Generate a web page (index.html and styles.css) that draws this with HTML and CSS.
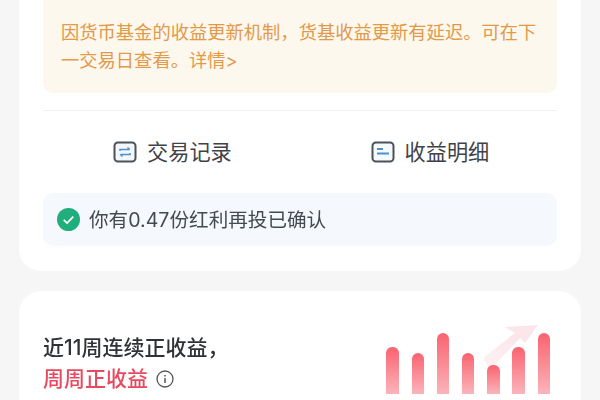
FILE: index.html
```html
<!DOCTYPE html>
<html lang="zh-CN">
<head>
    <meta charset="UTF-8">
    <title>收益详情</title>
    <link rel="stylesheet" href="styles.css">
</head>
<body>
    <div class="page">
        <div class="card card-top">
            <div class="notice">因货币基金的收益更新机制，货基收益更新有延迟。可在下一交易日查看。详情&gt;</div>
            <div class="actions">
                <div class="action">
                    <svg viewBox="0 0 24 22" width="24" height="22">
                        <rect x="1.500" y="1.500" width="21" height="19" rx="3.500" fill="#f3f7fb" stroke="#4d5258" stroke-width="2"/>
                        <path d="M7 10V8.500h9.500M14.500 6.500l2.300 2M17 12v1.500H7.500M9.500 15.500l-2.300-2" fill="none" stroke="#4f8fd0" stroke-width="1.500"/>
                    </svg>
                    <span>交易记录</span>
                </div>
                <div class="action">
                    <svg viewBox="0 0 24 22" width="24" height="22">
                        <rect x="1.500" y="1.500" width="21" height="19" rx="3.500" fill="#f6f9fc" stroke="#4d5258" stroke-width="2"/>
                        <path d="M6 8h6M6 12.500h12" fill="none" stroke="#4f8fd0" stroke-width="1.800"/>
                    </svg>
                    <span>收益明细</span>
                </div>
            </div>
            <div class="status">
                <svg viewBox="0 0 24 24" width="23" height="23">
                    <circle cx="12" cy="12" r="12" fill="#1fae7c"/>
                    <path d="M7 12.500l3.500 3.200 6.500-6.700" fill="none" stroke="#fff" stroke-width="1.800"/>
                </svg>
                <span>你有0.47份红利再投已确认</span>
            </div>
        </div>

        <div class="card card-bottom">
            <div class="headline">
                <div>近11周连续正收益，</div>
                <div class="headline-red">
                    周周正收益
                    <svg viewBox="0 0 18 18" width="18" height="18">
                        <circle cx="9" cy="9" r="8" fill="none" stroke="#555" stroke-width="1.300"/>
                        <path d="M9 8v5M9 5v1.500" fill="none" stroke="#555" stroke-width="1.500"/>
                    </svg>
                </div>
            </div>
            <div class="chart">
                <svg class="chart-arrow" viewBox="0 0 70 60" width="70" height="60">
                    <defs>
                        <linearGradient id="arrowFade" x1="1" y1="0" x2="0" y2="1">
                            <stop offset="0.300" stop-color="#fbe6ea"/>
                            <stop offset="1" stop-color="#fdf3f5"/>
                        </linearGradient>
                    </defs>
                    <path d="M30 7L63 5 50 23 45 18 15 50 8 38 40 13z" fill="url(#arrowFade)"/>
                </svg>
                <div class="bar" style="height:47px"></div>
                <div class="bar" style="height:41px"></div>
                <div class="bar" style="height:61px"></div>
                <div class="bar" style="height:41px"></div>
                <div class="bar" style="height:29px"></div>
                <div class="bar" style="height:47px"></div>
                <div class="bar" style="height:61px"></div>
            </div>
        </div>
    </div>
</body>
</html>
```

FILE: styles.css
```css
html, body {
    margin: 0;
    height: 100%;
    overflow: hidden;
}

body {
    background: #f6f6f6;
    font-family: "Inter", "Noto Sans CJK SC", sans-serif;
}

.page {
    display: flex;
    flex-direction: column;
    gap: 20px;
    padding: 0 19px;
    filter: blur(0.5px);
}

.card {
    background: #fff;
    border-radius: 22px;
    padding: 0 24px;
}

.card-top {
    border-radius: 0 0 22px 22px;
    padding-bottom: 25px;
}

.notice {
    background: #fdf8ee;
    color: #e2994a;
    font-size: 18.300px;
    line-height: 28px;
    padding: 18px 18px 19px;
    border-radius: 0 0 10px 10px;
    margin-bottom: 17px;
}

.actions {
    display: flex;
    border-top: 1px solid #f2f2f2;
    height: 82px;
}

.action {
    display: flex;
    align-items: center;
    gap: 10px;
    color: #3f4349;
    font-size: 21.200px;
    padding-left: 70px;
    flex: 1;
}

.action + .action {
    padding-left: 71px;
}

.action span {
    margin-bottom: 3px;
}

.status {
    display: flex;
    align-items: center;
    gap: 9px;
    height: 53px;
    padding-left: 14px;
    background: #f5f8fc;
    border-radius: 10px;
    color: #454a50;
    font-size: 19.600px;
}

.status span {
    margin-bottom: 3px;
}

.card-bottom {
    display: flex;
    justify-content: space-between;
    box-sizing: border-box;
    padding: 41px 31px 0 24px;
    height: 109px;
    border-radius: 22px 22px 0 0;
}

.headline {
    color: #2f3236;
    font-size: 21px;
    font-weight: 500;
    line-height: 31px;
}

.headline-red {
    display: flex;
    align-items: center;
    gap: 8px;
    color: #e8495f;
}

.chart {
    position: relative;
    display: flex;
    align-items: flex-end;
    gap: 12.700px;
    height: 61px;
    margin-top: 1px;
}

.chart-arrow {
    position: absolute;
    right: 5px;
    top: -13px;
}

.bar {
    position: relative;
    width: 12.500px;
    border-radius: 6px 6px 0 0;
    background: linear-gradient(#f9636f, #fbb4bb);
}
```
